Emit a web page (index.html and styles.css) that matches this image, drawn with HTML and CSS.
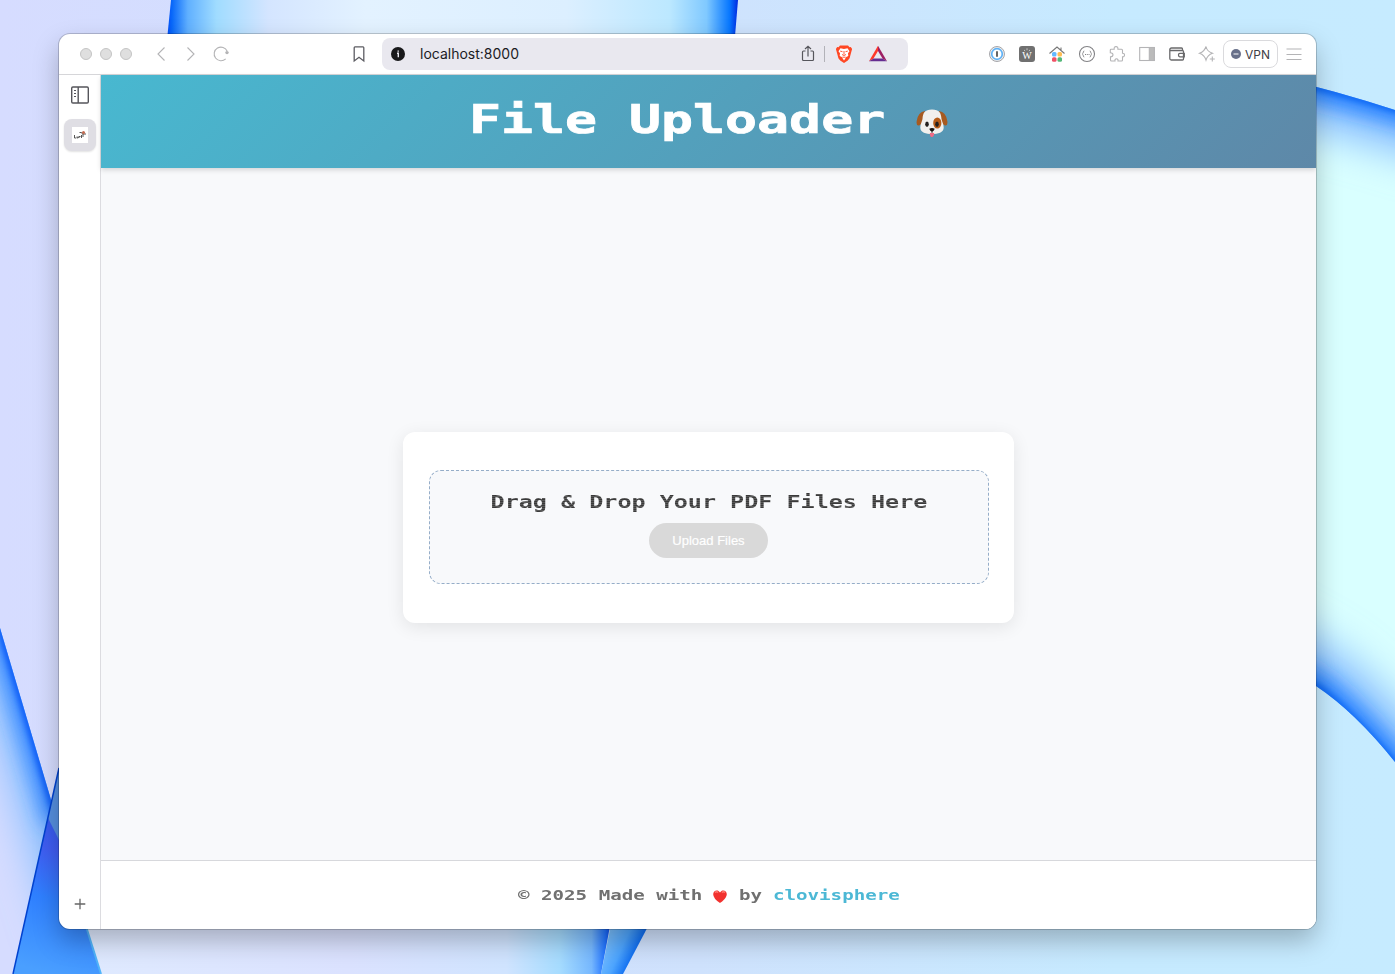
FILE: index.html
```html
<!DOCTYPE html>
<html lang="en">
<head>
<meta charset="utf-8">
<title>File Uploader</title>
<link rel="stylesheet" href="styles.css">
</head>
<body>
<svg class="wallpaper" viewBox="0 0 1395 974" preserveAspectRatio="none" aria-hidden="true">
  <defs>
    <linearGradient id="sky" x1="0" x2="1"><stop offset="0" stop-color="#d6dcff"/><stop offset=".5" stop-color="#cfe2fd"/><stop offset=".8" stop-color="#c6eaff"/><stop offset="1" stop-color="#c6ebff"/></linearGradient>
    <linearGradient id="top" x1="0" x2="1"><stop offset="0" stop-color="#0040f5"/><stop offset=".012" stop-color="#0868fa"/><stop offset=".04" stop-color="#60b0ff"/><stop offset=".09" stop-color="#a0dcff"/><stop offset=".18" stop-color="#d4e5ff"/><stop offset=".35" stop-color="#e3f2ff"/><stop offset=".7" stop-color="#dcefff"/><stop offset=".88" stop-color="#bce8ff"/><stop offset=".945" stop-color="#80c9ff"/><stop offset=".985" stop-color="#0878ff"/><stop offset="1" stop-color="#0028e0"/></linearGradient>
    <linearGradient id="petal" gradientUnits="userSpaceOnUse" x1="95" y1="820" x2="50" y2="974"><stop offset="0" stop-color="#3159ea"/><stop offset=".25" stop-color="#405df2"/><stop offset=".55" stop-color="#2f80ff"/><stop offset="1" stop-color="#4a9fff"/></linearGradient>
    <linearGradient id="fold" x1="0" x2="1"><stop offset="0" stop-color="#dfeaff"/><stop offset=".5" stop-color="#dbe2ff"/><stop offset=".8" stop-color="#d0e4ff"/><stop offset=".9" stop-color="#a6dcff"/><stop offset=".96" stop-color="#76b8ff"/><stop offset=".985" stop-color="#2274ff"/><stop offset="1" stop-color="#0038df"/></linearGradient>
    <linearGradient id="fold2" gradientUnits="userSpaceOnUse" x1="603" y1="938" x2="638" y2="954"><stop offset="0" stop-color="#83c5ff"/><stop offset=".55" stop-color="#4da5ff"/><stop offset="1" stop-color="#0060ed"/></linearGradient>
    <filter id="wide" filterUnits="userSpaceOnUse" x="-150" y="-100" width="1700" height="1200"><feGaussianBlur stdDeviation="20"/></filter>
    <filter id="soft" filterUnits="userSpaceOnUse" x="-150" y="-100" width="1700" height="1200"><feGaussianBlur stdDeviation="10"/></filter>
    <filter id="softer" filterUnits="userSpaceOnUse" x="-150" y="-100" width="1700" height="1200"><feGaussianBlur stdDeviation="3"/></filter>
    <clipPath id="rightClip"><path d="M1200 60Q1310 82 1395 110V762Q1355 712 1316 686Q1250 645 1200 630Z"/></clipPath>
    <clipPath id="leftClip"><path d="M0 628L52 803L13 974H0Z"/></clipPath>
  </defs>
  <rect width="1395" height="974" fill="url(#sky)"/>
  <path d="M171 0H738L733 60H165Z" fill="url(#top)"/>
  <g clip-path="url(#rightClip)" fill="none">
    <rect x="1200" y="50" width="195" height="720" fill="#d9ffff"/>
    <path d="M1200 60Q1310 82 1450 125M1450 830Q1355 712 1316 686Q1250 645 1200 630" stroke="#86bcff" stroke-width="80" filter="url(#wide)"/>
    <path d="M1200 60Q1310 82 1450 125M1450 830Q1355 712 1316 686Q1250 645 1200 630" stroke="#2080ff" stroke-width="26" filter="url(#soft)"/>
    <path d="M1200 60Q1310 82 1450 125M1450 830Q1355 712 1316 686Q1250 645 1200 630" stroke="#0058f0" stroke-width="5" filter="url(#softer)"/>
  </g>
  <g clip-path="url(#leftClip)" fill="none">
    <rect y="620" width="60" height="354" fill="#d6dcff"/>
    <path d="M-30 526L88 926" stroke="#84bdff" stroke-width="64" filter="url(#wide)"/>
    <path d="M-30 526L58 823" stroke="#3084ff" stroke-width="24" filter="url(#soft)"/>
    <path d="M-30 526L58 823" stroke="#0050f5" stroke-width="6" filter="url(#softer)"/>
  </g>
  <path d="M80 910L101 974H601L613 910Z" fill="url(#fold)"/>
  <path d="M59 768V915L84 920L101 974H13Z" fill="url(#petal)"/>
  <path d="M59 768L48 818L59 840Z" fill="#568fdf"/>
  <path d="M59 768L13 974" stroke="#0042d0" stroke-width="1.500"/>
  <path d="M84 920L101 974" stroke="#51b4fa" stroke-width="2"/>
  <path d="M613 915L601 974H623L654 915Z" fill="url(#fold2)"/>
</svg>

<div class="window">
  <div class="toolbar">
    <div class="lights"><i></i><i></i><i></i></div>
    <div class="slots nav">
      <svg viewBox="0 0 20 20"><path d="M13.500 3.500L7 10l6.500 6.500"/></svg>
      <svg viewBox="0 0 20 20"><path d="M6.500 3.500L13 10l-6.500 6.500"/></svg>
      <svg viewBox="0 0 20 20"><path d="M14.700 14.800A6.800 6.800 0 1 1 16.200 7.200"/><circle cx="16" cy="8.600" r="1.700" fill="#b4b4b6" stroke="none"/></svg>
    </div>
    <div class="slots bookmark"><svg viewBox="0 0 20 20"><path d="M6 2.800h8q.8 0 .8 1V17L10 13.300 5.200 17V3.800q0-1 .8-1Z"/></svg></div>
    <div class="address">
      <svg class="info" viewBox="0 0 14 14"><circle cx="7" cy="7" r="7" fill="#19191b"/><path d="M6 6.200h1.300v4M7.200 3.500v1.300" stroke="#e9e8ef" stroke-width="1.400" fill="none"/></svg>
      <span class="url">localhost:8000</span>
      <svg class="share" viewBox="0 0 20 20"><path d="M7.500 7H5.500q-1 0-1 1v7.500q0 1 1 1h9q1 0 1-1V8q0-1-1-1h-2M10 12.500V2.500M7 5l3-2.700L13 5"/></svg>
      <span class="divider"></span>
      <svg class="brave" viewBox="0 0 20 20"><path d="M6 1.500h8l1.500 1.700 1.300-.1 1.300 2-.7 2.300-1.800 6.800-1.800 2.200L10 19l-3.800-2.600-1.800-2.200-1.800-6.800-.7-2.300 1.300-2 1.300.1Z" fill="#ff4724"/><path d="M6.500 4.300 10 5l3.500-.7 2 3-1.500 2 .3 2.600-2 1-2.300 3.600-2.300-3.600-2-1L6 9.300 4.500 7.300Z" fill="#fff"/><path d="M6.200 7.100l2.300.6M13.800 7.100l-2.300.6M10 7v3.500M8 10.500l2 1 2-1M8.300 13.200h3.400" stroke="#ff4724" stroke-width=".9" fill="none"/></svg>
      <svg class="bat" viewBox="0 0 20 20"><path d="M10 1.800L1 17.300l4.500-2.700L10 7Z" fill="#ff392b"/><path d="M10 1.800L19 17.300l-4.500-2.700L10 7Z" fill="#9e1f63"/><path d="M1 17.300h18l-4.500-2.700h-9Z" fill="#662d91"/></svg>
    </div>
    <div class="slots extensions">
      <svg viewBox="0 0 20 20"><circle cx="10" cy="10" r="7.500" fill="#eee" stroke="#909196" stroke-width=".8"/><circle cx="10" cy="10" r="5.300" fill="#fff" stroke="#5fb2f7" stroke-width="1.700"/><path d="M10 7.200v5.600" stroke="#555" stroke-width="1.800"/></svg>
      <span class="wiki"><svg viewBox="0 0 16 16"><path d="M5 4l1.200 1M8 2.300v2M11 4L9.800 5" stroke="#ddd" stroke-width=".8"/></svg><b>W</b></span>
      <svg viewBox="0 0 20 20"><path d="M2.500 9.500L10 3l7.500 6.500M14 6V3.500" stroke="#777" fill="none"/><g stroke="none"><rect x="5" y="8" width="4.500" height="4.500" rx="1.500" fill="#63b9ff"/><rect x="10.500" y="8" width="4.500" height="4.500" rx="1.500" fill="#ffbd54"/><rect x="5" y="13.300" width="4.500" height="4.500" rx="1.500" fill="#f05267"/><rect x="10.500" y="13.300" width="4.500" height="4.500" rx="1.500" fill="#54b879"/></g></svg>
      <svg viewBox="0 0 20 20"><g stroke="#838386"><circle cx="10" cy="10" r="7.500"/><path d="M7.300 7q-1 0-1 1.100 0 1.400-1 1.900 1 .5 1 1.900 0 1.100 1 1.100M12.700 7q1 0 1 1.100 0 1.400 1 1.900-1 .5-1 1.900 0 1.100-1 1.100" stroke-width=".9"/><path d="M8 10.500h4.500" stroke-dasharray="1 .8"/></g></svg>
      <svg viewBox="0 0 20 20"><path d="M4 5.200h3.200Q6.800 2.600 9 2.600T10.900 5.200h3.600q1 0 1 1v3Q17.500 9 17.500 11t-2 1.900v3.100q0 1-1 1H11Q11.300 14.800 9.500 14.800T8 17H4.500q-1 0-1-1v-3.200Q6 12.800 6 10.800T3.300 8.700V6Q3.300 5.200 4 5.200Z"/></svg>
      <svg viewBox="0 0 20 20"><rect x="2.700" y="3.500" width="14.600" height="13"/><path d="M12.300 3.500h5v13h-5Z" fill="#bbb"/></svg>
      <svg viewBox="0 0 20 20"><g stroke="#69696b" stroke-width="1.300"><path d="M15.500 6.500V5q0-1-1-1h-10Q2.800 4 2.800 5.500v9q0 1.500 1.500 1.500h11.200q1 0 1-1V7.500q0-1-1-1H4.200Q2.800 6.500 2.800 5.200M17.300 9.300h-4.500q-1.300 0-1.300 1.800t1.300 1.800h4.500Z"/></g></svg>
      <svg viewBox="0 0 20 20"><path d="M9 2.500q1 5 6.500 6.800-5 1.700-6.500 6.700-1.500-5-6.500-6.700Q7.500 7.500 9 2.500ZM15.300 12.500v5M12.800 15h5"/></svg>
    </div>
    <div class="vpn"><svg viewBox="0 0 10 10"><circle cx="5" cy="5" r="5" fill="#68708a"/><path d="M2.500 5h5" stroke="#fff" stroke-width="1.200"/></svg><span>VPN</span></div>
    <div class="slots menu"><svg viewBox="0 0 20 20"><path d="M2.500 5h15M2.500 10.500h15M2.500 15.500h15"/></svg></div>
  </div>
  <div class="body">
    <aside class="sidebar">
      <svg class="panel" viewBox="0 0 20 20"><g fill="none" stroke="#55555b" stroke-width="1.400"><rect x="1.700" y="2" width="16.600" height="16" rx="1.200"/><path d="M8.200 2v16"/><path d="M4 5.500h2M4 8.500h2M4 11.500h2" stroke-width="1.100"/></g></svg>
      <div class="tab"><svg viewBox="0 0 16 16"><path fill="#fff" d="M0 0h16v16H0Z"/><path d="M2.500 8v3h1.800M5 9.500v1.400h1.200V9.500M7 11V9.500h1.500M9.500 11V8M11 7v3" fill="none" stroke="#444" stroke-width=".9"/><path d="M7.500 5.500h2l1 1.500h3.500" fill="none" stroke="#555" stroke-width="1"/><circle cx="11.500" cy="5.400" r="1.500" fill="#c46a50"/></svg></div>
      <svg class="plus" viewBox="0 0 12 12"><path d="M6 .7v10.600M.7 6h10.600" stroke="#666" stroke-width="1.300"/></svg>
    </aside>
    <div class="page">
      <header class="header">
        <h1><span class="title">File Uploader</span>
          <svg class="dog" viewBox="0 0 32 28"><path d="M9 2Q2 3 .7 12q-.8 5 2.300 4.500Q7 15 9 8Z" fill="#a75a20"/><path d="M23 2q7 1 8.300 10 .8 5-2.300 4.500Q25 15 23 8Z" fill="#a75a20"/><path d="M16 .6C8.500.6 7 4 6.500 10 6 13 4.300 15 4.300 18.500 4.300 23.500 10 25 16 25s11.700-1.500 11.700-6.500C27.700 15 26 13 25.500 10 25 4 23.500.6 16 .6Z" fill="#f2f0ed"/><ellipse cx="21.300" cy="14" rx="4.100" ry="5.500" fill="#b65c18"/><ellipse cx="11" cy="15.300" rx="1.800" ry="2.700" fill="#24201e"/><ellipse cx="21" cy="15.300" rx="1.800" ry="2.700" fill="#24201e"/><path d="M13.800 24q0 4.300 2.200 4t2.200-4Z" fill="#f16a86"/><path d="M13.300 19.800q2.700-1.500 5.400 0-.5 2-2.200 2.700v1.300h-1v-1.300q-1.700-.7-2.200-2.700Z" fill="#17120f"/></svg>
        </h1>
      </header>
      <main class="main">
        <section class="card">
          <div class="dropzone">
            <h2><span>Drag &amp; Drop Your PDF Files Here</span></h2>
            <button type="button" class="upload" disabled>Upload Files</button>
          </div>
        </section>
      </main>
      <footer class="footer">
        <span class="made"><span>© 2025 Made with</span></span>
        <svg class="heart" viewBox="0 0 14 13"><path d="M7 13Q.2 8.500.2 4.200C.2.200 5-1 7 2.500 9-1 13.800.2 13.800 4.200 13.800 8.500 7 13 7 13Z" fill="#f2322f"/><path d="M2 2.500q1.500-1.500 3.200 0M8.800 2.500q1.700-1.500 3.200 0" stroke="#ff7a70" stroke-width="1.200" fill="none"/></svg>
        <span class="by"><span>by</span></span>
        <a class="author"><span>clovisphere</span></a>
      </footer>
    </div>
  </div>
</div>
</body>
</html>
```

FILE: styles.css
```css
* { box-sizing: border-box; }
html, body { height: 100%; }
body {
  margin: 0;
  padding: 34px 79px 45px 59px;
  overflow: hidden;
  background: #cfe2fd;
  font-family: Inter, "Liberation Sans", sans-serif;
}
svg { display: block; flex: none; }
.wallpaper { position: absolute; inset: 0; width: 100%; height: 100%; }

/* Browser window */
.window {
  position: relative;
  height: 895px;
  display: flex;
  flex-direction: column;
  background: #fff;
  border-radius: 11px;
  overflow: hidden;
  box-shadow: 0 0 0 1px rgba(0, 0, 0, .18), 0 12px 26px rgba(0, 0, 0, .25);
}
.toolbar {
  flex: none;
  height: 41px;
  display: flex;
  align-items: center;
  border-bottom: 1px solid #d6d6d9;
}
.lights { display: flex; gap: 8px; margin-left: 21px; margin-right: 14px; }
.lights i { width: 12px; height: 12px; border-radius: 50%; background: #dfdfdf; border: 1px solid #c4c4c4; }
.slots { display: flex; align-items: center; }
.slots > svg { width: 20px; height: 20px; margin: 0 5px; fill: none; stroke: #b4b4b6; stroke-width: 1.1; }
.bookmark { margin-left: 108px; }
.bookmark > svg { stroke: #5c5c62; stroke-width: 1.3; }
.address {
  width: 526px;
  height: 32px;
  margin-left: 8px;
  padding-left: 9px;
  display: flex;
  align-items: center;
  background: #e9e8ef;
  border-radius: 8px;
}
.info { width: 14px; height: 14px; }
.url { width: 378px; margin-left: 15px; font-size: 14px; line-height: 20px; color: #1b1b1f; }
.share { width: 20px; height: 20px; fill: none; stroke: #56565c; stroke-width: 1.2; }
.divider { width: 1px; height: 16px; margin: 0 9px 0 6px; background: #b2b2b8; }
.brave, .bat { width: 20px; height: 20px; }
.bat { margin-left: 14px; }
.extensions { margin-left: 74px; }
.wiki {
  width: 16px; height: 16px; margin: 0 7px;
  display: grid; place-items: center;
  background: #707070; border-radius: 3px; color: #fff;
}
.wiki > * { grid-area: 1 / 1; }
.wiki svg { width: 16px; height: 16px; }
.wiki b { padding-top: 4px; font: 10px/12px "Liberation Serif", serif; }
.vpn {
  width: 55px; height: 28px; margin-left: 1px; padding-left: 7px;
  display: flex; align-items: center; gap: 4px;
  border: 1px solid #dadadd; border-radius: 8px;
  font-size: 12px; color: #3f4046;
}
.vpn svg { width: 10px; height: 10px; }
.menu { margin-left: 1px; }

/* Vertical tabs */
.body { flex: 1; display: flex; min-height: 0; }
.sidebar {
  width: 42px; padding: 10px 0 19px;
  display: flex; flex-direction: column; align-items: center;
  border-right: 1px solid #dcdce0;
}
.panel { width: 20px; height: 20px; }
.tab {
  width: 32px; height: 32px; margin-top: 14px;
  display: grid; place-items: center;
  background: #dfdee4; border-radius: 8px;
  box-shadow: 0 1px 2px rgba(0, 0, 0, .12);
}
.tab svg { width: 16px; height: 16px; }
.plus { width: 12px; height: 12px; margin-top: auto; }

/* Uploader page */
.page { flex: 1; display: flex; flex-direction: column; background: #f8f9fb; }
.header {
  position: relative;
  height: 93px;
  display: flex; justify-content: center;
  padding-top: 24px;
  background: linear-gradient(135deg, #48b8d0, #5e88a8);
  box-shadow: 0 2px 5px rgba(0, 0, 0, .15);
}
h1 { display: flex; width: 479px; margin: 0; color: #fff; font: bold 38.4px/42px "DejaVu Sans Mono", monospace; }
.title {
  width: 448px; white-space: nowrap;
  transform: scaleX(1.385); transform-origin: 0 0;
  -webkit-text-stroke: .7px #fff;
}
.dog { width: 32px; height: 28px; margin-top: 10px; }
.main { flex: 1; display: grid; place-items: center; padding-top: 27px; }
.card {
  width: 611px; height: 191px; padding: 38px 25px 39px 26px;
  background: #fff; border-radius: 12px;
  box-shadow: 0 4px 18px rgba(0, 0, 0, .09);
}
.dropzone {
  height: 114px; padding: 18px 1px 0 0;
  display: flex; flex-direction: column; align-items: center;
  background: #f8f9fb; border: 1px dashed #95adc8; border-radius: 12px;
}
h2 { margin: 0 0 9px; font: bold 18px/25px "DejaVu Sans Mono", monospace; }
/* Scanlines across the letters */
h2 span {
  display: block; transform: scaleX(1.3); white-space: nowrap;
  color: transparent;
  background: repeating-linear-gradient(#3a3a3a 0 1px, #595959 1px 2px);
  -webkit-background-clip: text; background-clip: text;
}
.upload {
  width: 119px; height: 35px; padding: 0;
  border: 0; border-radius: 18px;
  background: #d9d9d9; color: #fff;
  font: 13px "Liberation Sans", Arial, sans-serif;
  -webkit-text-stroke: .2px #fff;
}
.footer {
  height: 69px; display: flex; align-items: center; justify-content: center;
  background: #fff; border-top: 1px solid #d7d8dc;
  font: bold 14.4px/20px "DejaVu Sans Mono", monospace; color: #707070;
}
.footer span span, .author span { display: block; transform: scaleX(1.33); transform-origin: 0 0; white-space: nowrap; }
.made { width: 195px; }
.heart { width: 14px; height: 13px; margin-top: 2px; }
.by { width: 34px; margin-left: 12px; }
.author { width: 127px; color: #4cb8d5; }
```
